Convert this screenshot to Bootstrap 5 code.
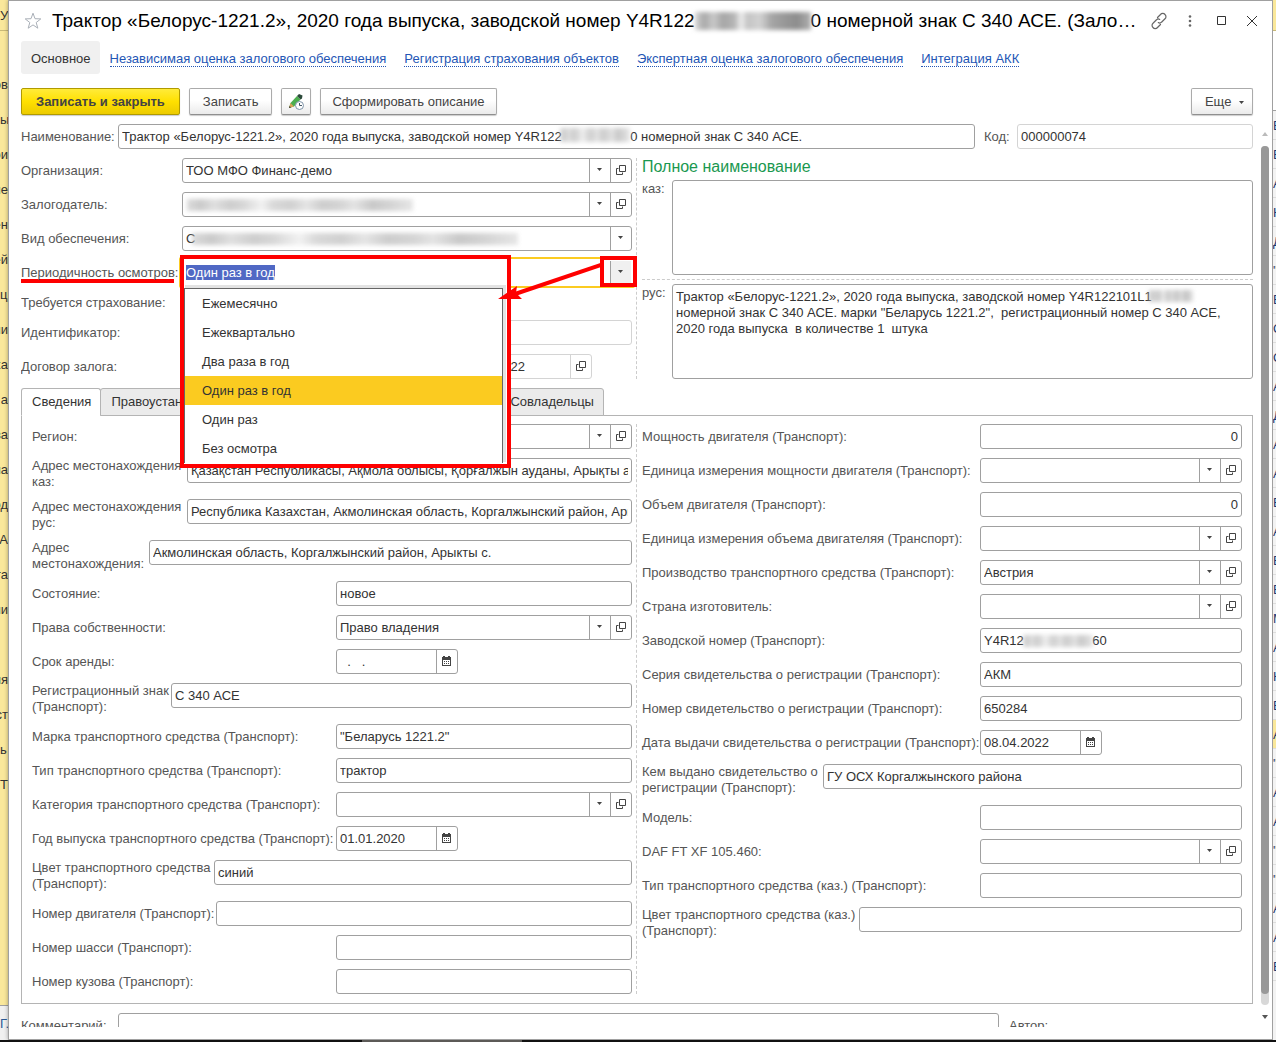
<!DOCTYPE html>
<html lang="ru">
<head>
<meta charset="utf-8">
<meta name="viewport" content="width=device-width, initial-scale=1">
<title>Трактор «Белорус-1221.2» (Залоговое обеспечение)</title>
<link rel="stylesheet" href="https://cdn.jsdelivr.net/npm/bootstrap@5.3.0/dist/css/bootstrap.min.css">
<script src="https://cdn.jsdelivr.net/npm/bootstrap@5.3.0/dist/js/bootstrap.bundle.min.js" defer></script>
<style>
  :root { --line: #a0a0a0; --ink: #333; --lbl: #555; --red: #fe0000; --gold: #fbcb20; }
  body { font: 13px/16px "Liberation Sans", Arial, sans-serif; color: var(--ink); background: #fff; }
  .side-left { width: 8px; flex: none; background: #fae89b; }
  .side-left span { height: 35px; line-height: 35px; white-space: nowrap; direction: rtl; display: block; flex: none; }
  .side-left .side-head { height: 31px; line-height: 31px; border-bottom: 1px solid #c9b977; margin-bottom: 36px; direction: ltr; }
  .side-left .side-foot { background: #f0f0f0; border-top: 1px solid #a0a0a0; color: #2c5a96; direction: ltr; }
  .side-left .side-start { direction: ltr; }
  .side-right { width: 3px; flex: none; color: #1c3a70; background: #f3f3f3; }
  .side-right .strip-top { height: 31px; background: #fae89b; border-bottom: 1px solid #c9b977; flex: none; }
  .side-right .strip-gap { height: 80px; border-bottom: 1px solid #a0a0a0; background: #fff; flex: none; }
  .side-right span { display: block; height: 29px; line-height: 29px; border-bottom: 1px solid #ddd; flex: none; }
  .side-right .picked { background: #fae89b; }
  .taskbar { height: 2px; background: #111; }
  .taskbar div { width: 160px; margin-left: 362px; background: #5c5a57; }

  .win { border: 1px solid var(--line); background: #fff; box-shadow: 0 0 4px rgba(0,0,0,.35); padding-left: 12px; min-width: 0; }
  .title-row { height: 40px; flex: none; padding-right: 10px; }
  .title-row h1 { font-size: 19px; line-height: 28px; color: #000; }
  .star { margin: 0 10px 0 3px; }
  .tool-ico { border: 0; background: none; padding: 0; width: 20px; height: 20px; margin-left: 11px; display: flex; align-items: center; justify-content: center; flex: none; }
  .smudge { background: linear-gradient(90deg, #ccc, #b4b4b4 6%, #d2d2d2 12%, #b9b9b9 19%, #c6c6c6 25%, #ececec 33%, #c9c9c9 38%, #bdbdbd 46%, #dadada 53%, #b8b8b8 60%, #c3c3c3 68%, #d8d8d8 74%, #b2b2b2 82%, #c2c2c2 90%, #dcdcdc); filter: blur(2px); }
  .title-row .smudge { display: inline-block; width: 116px; height: 18px; vertical-align: -3px; background: linear-gradient(90deg, #d5d5d5, #a9a9a9 8%, #c9c9c9 16%, #a6a6a6 24%, #b5b5b5 34%, #efefef 40%, #c4c4c4 45%, #d2d2d2 56%, #a5a5a5 66%, #979797 78%, #8d8d8d 88%, #b0b0b0); }

  .sections { height: 33px; flex: none; gap: 18px; font-size: 13px; }
  .sections .here { background: #f0f0f0; border-radius: 3px; height: 33px; line-height: 35px; padding: 0 9px 0 10px; margin-right: -8px; color: var(--ink); }
  .sections a:not(.here) { color: #2456b5; text-decoration: none; border-bottom: 1px dotted #2456b5; line-height: 14px; margin-top: 3px; }

  .cmds { margin-top: 14px; gap: 9px; padding-right: 19px; flex: none; }
  .cmd { font-size: 13px; line-height: 25px; height: 27px; padding: 0 13px; color: #444; border: 1px solid #ababab; border-bottom-color: #8f8f8f; border-radius: 2px; background: linear-gradient(#fff, #fff 45%, #ebebeb); box-shadow: 0 1px 1px rgba(0,0,0,.2); }
  .cmd-main { font-weight: bold; padding: 0 14px; background: linear-gradient(#ffeb3a, #ffe000 50%, #eccb00); border-color: #b09a00; }
  .cmd-icon { width: 30px; padding: 0; }
  .cmd-tight { padding: 0 11px; }

  .body-row, .view { min-height: 0; }
  .view { overflow: hidden; margin-bottom: 12px; }
  .form-area { min-width: 0; padding-top: 9px; }
  .cols { gap: 10px; position: relative; }
  .cols > div { flex: 1 1 0; min-width: 0; }
  .cols::after { content: ""; position: absolute; top: 0; bottom: 0; left: calc(50% - 1px); border-left: 1px dashed #ccc; }
  .stack { display: flex; flex-direction: column; gap: 9px; }
  .line { display: flex; align-items: flex-start; min-height: 25px; }
  .head-line { margin-bottom: 9px; }
  .line > label, .line > .cap { color: var(--lbl); flex: none; padding-top: 5px; width: 304px; white-space: nowrap; }
  .line > .cap { width: 254px; padding-left: 10px; }
  .line.two > label { padding-top: 0; min-height: 32px; white-space: normal; }
  .line.low { min-height: 17px; }
  .line.low > label { padding-top: 1px; }
  .main-left .line > label { width: 161px; }
  .line > label.l-97 { width: 97px; }
  .line > label.l-117 { width: 117px; }
  .line > label.l-139 { width: 139px; }
  .line > label.l-155 { width: 155px; }
  .line > label.l-182 { width: 182px; }
  .line > label.l-184 { width: 184px; }
  .right-col .line > label { width: 338px; }
  .right-col .line > label.l-181 { width: 181px; }
  .right-col .line > label.l-217 { width: 217px; }

  .fld { display: flex; flex: 1 1 0; min-width: 0; height: 25px; border: 1px solid var(--line); border-radius: 3px; background: #fff; position: relative; }
  .fld input { border: 0; padding: 0 3px; flex: 1 1 0; min-width: 0; width: 0; height: 23px; background: none; color: var(--ink); outline: 0; }
  .fld button { border: 0; border-left: 1px solid var(--line); width: 21px; padding: 0 1px 2px 0; background: none; display: flex; align-items: center; justify-content: center; flex: none; }
  .fld.dim, .fld.dim button { border-color: #d4d4d4; }
  .fld.date { flex: 0 0 122px; }
  .fld.deal { margin-right: 40px; }
  .fld.deal input { text-align: right; padding-right: 45px; }
  .fld .smudge { position: absolute; top: 6px; height: 12px; opacity: .7; }
  .fld .sm-name { left: 441px; width: 70px; top: 3px; height: 14px; }
  .sm-owner { left: 4px; width: 226px; }
  .sm-kind { left: 9px; width: 326px; }
  .sm-serial { left: 42px; width: 70px; }
  .sm-memo { left: 507px; width: 44px; top: 6px; height: 12px; position: absolute; opacity: .8; }
  .code-fld { flex: 0 0 236px; }
  .line > label.l-code { width: 33px; margin-left: 9px; }

  .fld.hot { border-color: transparent; }
  .fld.hot::before { content: ""; position: absolute; inset: -4px -4px; border: 2px solid var(--gold); border-radius: 2px; pointer-events: none; }
  .fld.hot button { background: #f0f0f0; }
  .fld.hot input::selection { background: #5068c4; color: #fff; }
  .choice { position: absolute; z-index: 5; left: 1px; top: 27px; width: 319px; border: 1px solid #666; border-bottom: 0; border-radius: 0; background: #fff; box-shadow: 2px -2px 0 1px #e3e3e3; }
  .choice .list-group-item { border: 0; border-radius: 0; padding: 0 17px; height: 29px; line-height: 30px; color: var(--ink); background: #fff; }
  .choice .list-group-item.active { background: var(--gold); margin-top: 0; }
  .mark-list { position: absolute; z-index: 6; left: -3px; top: -6px; width: 331px; height: 213px; border: 4px solid var(--red); pointer-events: none; }
  .mark-back { position: absolute; left: -3px; top: -6px; width: 331px; height: 213px; background: #fff; z-index: 3; }
  .mark-btn { position: absolute; z-index: 6; right: -6px; top: -5px; width: 37px; height: 31px; border: 4px solid var(--red); pointer-events: none; }
  .mark-arrow { position: absolute; z-index: 7; right: 27px; top: 0; pointer-events: none; }
  .hot input { position: relative; z-index: 4; }
  .line > label.flagged { width: 153px; margin-right: 8px; height: 23px; border-bottom: 4px solid var(--red); }

  .full-name { color: #1a9850; font-size: 16px; line-height: 18px; margin: 0 0 4px; }
  .memo { flex: 1; height: 95px; resize: none; border: 1px solid var(--line); border-radius: 3px; padding: 4px 3px; color: var(--ink); outline: 0; display: block; overflow: hidden; white-space: pre-wrap; min-width: 0; }
  .memo-row { position: relative; }
  .memo-row > label { width: 30px; color: var(--lbl); padding-top: 1px; }
  .memo-sep { border-top: 1px dashed #ccc; margin: 4px 0; }

  .tabs { margin-top: 9px; height: 28px; margin-bottom: -1px; position: relative; }
  .tabs .nav-link { color: var(--ink); background: #ebebeb; border: 1px solid #b4b4b4; border-radius: 3px 3px 0 0; padding: 0 9px 0 10px; height: 28px; line-height: 26px; margin-left: -1px; text-align: left; }
  .tabs .nav-link.active { color: var(--ink); background: #fff; border-color: #b4b4b4 #b4b4b4 #fff; margin-left: 0; }
  .tabs .wide { width: 400px; }
  .panel { border: 1px solid #b4b4b4; padding: 8px 10px 9px; }
  .foot-line { margin-top: 9px; }
  .bar { width: 19px; flex: none; display: flex; flex-direction: column; align-items: center; padding: 17px 0 8px 5px; }
  .bar .track { flex: 1; width: 8px; border-radius: 4px; background: #d8d8d8; margin: 10px 0; padding-bottom: 11px; }
  .bar .thumb { height: 100%; border-radius: 4px; background: #999; }
</style>
</head>
<body>
<svg class="d-none" xmlns="http://www.w3.org/2000/svg">
  <symbol id="i-down" viewBox="0 0 5 3"><path d="M0 0h5L2.500 3z" fill="#444"/></symbol>
  <symbol id="i-open" viewBox="0 0 10 10"><path d="M3.500.500h6v6h-6zM2.500 3.500h-2v6h6v-2" fill="none" stroke="#444"/></symbol>
  <symbol id="i-cal" viewBox="0 0 9 10"><path d="M0 1h1V0h2v1h3V0h2v1h1v9H0zM1 4v5h7V4z" fill="#444" fill-rule="evenodd"/><path d="M2 5h1v1H2zM4 5h1v1H4zM6 5h1v1H6zM2 7h1v1H2zM4 7h1v1H4zM6 7h1v1H6z" fill="#444"/></symbol>
</svg>
<div class="vh-100 d-flex flex-column overflow-hidden">
  <div class="body-row d-flex flex-fill">
    <aside class="side-left d-flex flex-column overflow-hidden" aria-hidden="true">
      <span class="side-head">УМ</span>
      <span>ов</span><span class="side-start">ы</span><span>ои</span><span>че</span><span>ен</span><span>ей</span><span class="side-start">ц</span><span>ии</span><span>ка</span><span>а</span><span>ва</span><span>ла</span><span>од</span><span>МА</span><span>та</span><span>ыи</span><span></span><span>ия</span><span>ст</span><span class="side-start">ь</span><span>Т</span>
      <span class="side-foot mt-auto">Г.</span>
    </aside>

    <main class="win flex-fill d-flex flex-column">
      <header class="title-row d-flex align-items-center">
        <svg class="star flex-shrink-0" width="18" height="18" viewBox="0 0 18 18"><path d="M9 1.200l2 5.500 5.800.200-4.600 3.600 1.600 5.700L9 12.900l-4.800 3.300 1.600-5.700L1.200 6.900 7 6.700z" fill="none" stroke="#aab0b8"/></svg>
        <h1 class="m-0 text-truncate flex-fill">Трактор «Белорус-1221.2», 2020 года выпуска, заводской номер Y4R122<span class="smudge"></span>0 номерной знак С 340 АСЕ. (Залоговое обеспечение)</h1>
        <button class="tool-ico ms-2" aria-label="Ссылка"><svg width="18" height="18" viewBox="0 0 18 18" fill="none" stroke="#666" stroke-width="1.200" stroke-linecap="round"><path d="M7.500 5.500l3-3a2.900 2.900 0 0 1 4.500 0 2.900 2.900 0 0 1 0 4.300l-3.500 3.400a2.600 2.600 0 0 1-3.200.400M10.500 12.500l-3 3a2.900 2.900 0 0 1-4.500 0 2.900 2.900 0 0 1 0-4.300l3.500-3.400a2.600 2.600 0 0 1 3.200-.400"/></svg></button>
        <button class="tool-ico" aria-label="Меню"><svg width="4" height="12" viewBox="0 0 4 12" fill="#666"><circle cx="2" cy="1.500" r="1.300"/><circle cx="2" cy="6" r="1.300"/><circle cx="2" cy="10.500" r="1.300"/></svg></button>
        <button class="tool-ico" aria-label="Развернуть"><svg width="10" height="10" viewBox="0 0 10 10"><path d="M1.500.500h8v8h-8z" fill="none" stroke="#333"/></svg></button>
        <button class="tool-ico" aria-label="Закрыть"><svg width="10" height="10" viewBox="0 0 10 10"><path d="M0 0l10 10M10 0L0 10" stroke="#333"/></svg></button>
      </header>

      <nav class="sections d-flex align-items-center">
        <a class="here text-decoration-none" href="#">Основное</a>
        <a href="#">Независимая оценка залогового обеспечения</a>
        <a href="#">Регистрация страхования объектов</a>
        <a href="#">Экспертная оценка залогового обеспечения</a>
        <a href="#">Интеграция АКК</a>
      </nav>

      <div class="cmds d-flex">
        <button class="cmd cmd-main">Записать и закрыть</button>
        <button class="cmd">Записать</button>
        <button class="cmd cmd-icon" aria-label="История"><svg class="d-block m-auto" width="18" height="18" viewBox="0 0 18 18"><path d="M2 15l1.500-5L10 3l3.500 3.500-6.500 7z" fill="#4cae4f"/><path d="M10 3l2-2 3.500 1.500-.500 3-1.500 1z" fill="#2c4a3a"/><path d="M2 15l1.500-5 3.500 3.500z" fill="#d9a45b"/><path d="M2 15l.600-2 1.400 1.400z" fill="#333"/><circle cx="12.500" cy="12.500" r="4" fill="#fff" stroke="#7d93a8"/><path d="M12.500 10v2.500h2.500" fill="none" stroke="#456"/></svg></button>
        <button class="cmd cmd-tight">Сформировать описание</button>
        <button class="cmd ms-auto pe-2">Еще <svg class="ms-1" width="5" height="3"><use href="#i-down"/></svg></button>
      </div>

      <div class="view d-flex flex-fill">
        <div class="form-area flex-fill">
          <div class="line head-line">
            <label class="l-97" for="f-name">Наименование:</label>
            <div class="fld"><input id="f-name" value="Трактор «Белорус-1221.2», 2020 года выпуска, заводской номер Y4R122&nbsp;&nbsp;&nbsp;&nbsp;&nbsp;&nbsp;&nbsp;&nbsp;&nbsp;&nbsp;&nbsp;&nbsp;&nbsp;&nbsp;&nbsp;&nbsp;&nbsp;&nbsp;&nbsp;0 номерной знак С 340 АСЕ."><span class="smudge sm-name"></span></div>
            <label class="l-code" for="f-code">Код:</label>
            <div class="fld dim code-fld"><input id="f-code" value="000000074" readonly></div>
          </div>

          <div class="cols d-flex">
            <div class="stack main-left">
              <div class="line"><label for="f-org">Организация:</label><div class="fld"><input id="f-org" value="ТОО МФО Финанс-демо"><button aria-label="Выбрать"><svg width="5" height="3"><use href="#i-down"/></svg></button><button aria-label="Открыть"><svg width="10" height="10"><use href="#i-open"/></svg></button></div></div>
              <div class="line"><label for="f-owner">Залогодатель:</label><div class="fld"><input id="f-owner"><span class="smudge sm-owner"></span><button aria-label="Выбрать"><svg width="5" height="3"><use href="#i-down"/></svg></button><button aria-label="Открыть"><svg width="10" height="10"><use href="#i-open"/></svg></button></div></div>
              <div class="line"><label for="f-kind">Вид обеспечения:</label><div class="fld"><input id="f-kind" value="С"><span class="smudge sm-kind"></span><button aria-label="Выбрать"><svg width="5" height="3"><use href="#i-down"/></svg></button></div></div>
              <div class="line"><label class="flagged" for="f-period">Периодичность осмотров:</label>
                <div class="fld hot">
                  <div class="mark-back"></div>
                  <input id="f-period" role="combobox" aria-expanded="true" aria-controls="period-list" value="Один раз в год">
                  <button aria-label="Выбрать"><svg width="5" height="3"><use href="#i-down"/></svg></button>
                  <div class="choice list-group" id="period-list" role="listbox">
                    <a href="#" role="option" class="list-group-item">Ежемесячно</a>
                    <a href="#" role="option" class="list-group-item">Ежеквартально</a>
                    <a href="#" role="option" class="list-group-item">Два раза в год</a>
                    <a href="#" role="option" class="list-group-item active" aria-selected="true">Один раз в год</a>
                    <a href="#" role="option" class="list-group-item">Один раз</a>
                    <a href="#" role="option" class="list-group-item">Без осмотра</a>
                  </div>
                  <div class="mark-list"></div>
                  <div class="mark-btn"></div>
                  <svg class="mark-arrow" width="106" height="40" viewBox="0 0 106 40"><path d="M106 3L17 33" stroke="#fe0000" stroke-width="4"/><path d="M0 38L19 25l-1 7 6 6z" fill="#fe0000"/></svg>
                </div>
              </div>
              <div class="line low"><label for="f-ins">Требуется страхование:</label><input id="f-ins" type="checkbox" class="m-0"></div>
              <div class="line"><label for="f-id">Идентификатор:</label><div class="fld dim"><input id="f-id" readonly></div></div>
              <div class="line"><label for="f-deal">Договор залога:</label><div class="fld dim deal"><input id="f-deal" value="22" readonly><button aria-label="Открыть"><svg width="10" height="10"><use href="#i-open"/></svg></button></div></div>
            </div>
            <div>
              <h2 class="full-name">Полное наименование</h2>
              <div class="memo-row d-flex"><label for="f-kaz">каз:</label><textarea class="memo" id="f-kaz"></textarea></div>
              <div class="memo-sep"></div>
              <div class="memo-row d-flex"><label for="f-rus">рус:</label><textarea class="memo" id="f-rus">Трактор «Белорус-1221.2», 2020 года выпуска, заводской номер Y4R122101L1
номерной знак С 340 АСЕ. марки "Беларусь 1221.2",  регистрационный номер С 340 АСЕ, 2020 года выпуска  в количестве 1  штука</textarea><span class="smudge sm-memo"></span></div>
            </div>
          </div>

          <div class="tabs nav nav-tabs border-0 flex-nowrap" role="tablist">
            <button class="nav-link active" role="tab">Сведения</button>
            <button class="nav-link wide" role="tab">Правоустанавливающие документы</button>
            <button class="nav-link" role="tab">Совладельцы</button>
          </div>
          <div class="panel">
            <div class="cols d-flex">
              <div class="stack">
                <div class="line"><label for="a1">Регион:</label><div class="fld"><input id="a1"><button aria-label="Выбрать"><svg width="5" height="3"><use href="#i-down"/></svg></button><button aria-label="Открыть"><svg width="10" height="10"><use href="#i-open"/></svg></button></div></div>
                <div class="line two"><label class="l-155" for="a2">Адрес местонахождения каз:</label><div class="fld"><input id="a2" value="Қазақстан Республикасы, Ақмола облысы, Қорғалжын ауданы, Арықты ауылы"></div></div>
                <div class="line two"><label class="l-155" for="a3">Адрес местонахождения рус:</label><div class="fld"><input id="a3" value="Республика Казахстан, Акмолинская область, Коргалжынский район, Арыкты с."></div></div>
                <div class="line two"><label class="l-117" for="a4">Адрес местонахождения:</label><div class="fld"><input id="a4" value="Акмолинская область, Коргалжынский район, Арыкты с."></div></div>
                <div class="line"><label for="a5">Состояние:</label><div class="fld"><input id="a5" value="новое"></div></div>
                <div class="line"><label for="a6">Права собственности:</label><div class="fld"><input id="a6" value="Право владения"><button aria-label="Выбрать"><svg width="5" height="3"><use href="#i-down"/></svg></button><button aria-label="Открыть"><svg width="10" height="10"><use href="#i-open"/></svg></button></div></div>
                <div class="line"><label for="a7">Срок аренды:</label><div class="fld date"><input id="a7" value="&nbsp;&nbsp;.&nbsp;&nbsp;&nbsp;."><button aria-label="Календарь"><svg width="9" height="10"><use href="#i-cal"/></svg></button></div></div>
                <div class="line two"><label class="l-139" for="a8">Регистрационный знак (Транспорт):</label><div class="fld"><input id="a8" value="С 340 АСЕ"></div></div>
                <div class="line"><label for="a9">Марка транспортного средства (Транспорт):</label><div class="fld"><input id="a9" value='"Беларусь 1221.2"'></div></div>
                <div class="line"><label for="a10">Тип транспортного средства (Транспорт):</label><div class="fld"><input id="a10" value="трактор"></div></div>
                <div class="line"><label for="a11">Категория транспортного средства (Транспорт):</label><div class="fld"><input id="a11"><button aria-label="Выбрать"><svg width="5" height="3"><use href="#i-down"/></svg></button><button aria-label="Открыть"><svg width="10" height="10"><use href="#i-open"/></svg></button></div></div>
                <div class="line"><label for="a12">Год выпуска транспортного средства (Транспорт):</label><div class="fld date"><input id="a12" value="01.01.2020"><button aria-label="Календарь"><svg width="9" height="10"><use href="#i-cal"/></svg></button></div></div>
                <div class="line two"><label class="l-182" for="a13">Цвет транспортного средства (Транспорт):</label><div class="fld"><input id="a13" value="синий"></div></div>
                <div class="line"><label class="l-184" for="a14">Номер двигателя (Транспорт):</label><div class="fld"><input id="a14"></div></div>
                <div class="line"><label for="a15">Номер шасси (Транспорт):</label><div class="fld"><input id="a15"></div></div>
                <div class="line"><label for="a16">Номер кузова (Транспорт):</label><div class="fld"><input id="a16"></div></div>
              </div>
              <div class="stack right-col">
                <div class="line"><label for="b1">Мощность двигателя (Транспорт):</label><div class="fld"><input id="b1" class="text-end" value="0"></div></div>
                <div class="line"><label for="b2">Единица измерения мощности двигателя (Транспорт):</label><div class="fld"><input id="b2"><button aria-label="Выбрать"><svg width="5" height="3"><use href="#i-down"/></svg></button><button aria-label="Открыть"><svg width="10" height="10"><use href="#i-open"/></svg></button></div></div>
                <div class="line"><label for="b3">Объем двигателя (Транспорт):</label><div class="fld"><input id="b3" class="text-end" value="0"></div></div>
                <div class="line"><label for="b4">Единица измерения объема двигателяя (Транспорт):</label><div class="fld"><input id="b4"><button aria-label="Выбрать"><svg width="5" height="3"><use href="#i-down"/></svg></button><button aria-label="Открыть"><svg width="10" height="10"><use href="#i-open"/></svg></button></div></div>
                <div class="line"><label for="b5">Производство транспортного средства (Транспорт):</label><div class="fld"><input id="b5" value="Австрия"><button aria-label="Выбрать"><svg width="5" height="3"><use href="#i-down"/></svg></button><button aria-label="Открыть"><svg width="10" height="10"><use href="#i-open"/></svg></button></div></div>
                <div class="line"><label for="b6">Страна изготовитель:</label><div class="fld"><input id="b6"><button aria-label="Выбрать"><svg width="5" height="3"><use href="#i-down"/></svg></button><button aria-label="Открыть"><svg width="10" height="10"><use href="#i-open"/></svg></button></div></div>
                <div class="line"><label for="b7">Заводской номер (Транспорт):</label><div class="fld"><input id="b7" value="Y4R12&nbsp;&nbsp;&nbsp;&nbsp;&nbsp;&nbsp;&nbsp;&nbsp;&nbsp;&nbsp;&nbsp;&nbsp;&nbsp;&nbsp;&nbsp;&nbsp;&nbsp;&nbsp;&nbsp;60"><span class="smudge sm-serial"></span></div></div>
                <div class="line"><label for="b8">Серия свидетельства о регистрации (Транспорт):</label><div class="fld"><input id="b8" value="АКМ"></div></div>
                <div class="line"><label for="b9">Номер свидетельство о регистрации (Транспорт):</label><div class="fld"><input id="b9" value="650284"></div></div>
                <div class="line"><label for="b10">Дата выдачи свидетельства о регистрации (Транспорт):</label><div class="fld date"><input id="b10" value="08.04.2022"><button aria-label="Календарь"><svg width="9" height="10"><use href="#i-cal"/></svg></button></div></div>
                <div class="line two"><label class="l-181" for="b11">Кем выдано свидетельство о регистрации (Транспорт):</label><div class="fld"><input id="b11" value="ГУ ОСХ Коргалжынского района"></div></div>
                <div class="line"><label for="b12">Модель:</label><div class="fld"><input id="b12"></div></div>
                <div class="line"><label for="b13">DAF FT XF 105.460:</label><div class="fld"><input id="b13"><button aria-label="Выбрать"><svg width="5" height="3"><use href="#i-down"/></svg></button><button aria-label="Открыть"><svg width="10" height="10"><use href="#i-open"/></svg></button></div></div>
                <div class="line"><label for="b14">Тип транспортного средства (каз.) (Транспорт):</label><div class="fld"><input id="b14"></div></div>
                <div class="line two"><label class="l-217" for="b15">Цвет транспортного средства (каз.) (Транспорт):</label><div class="fld"><input id="b15"></div></div>
              </div>
            </div>
          </div>
          <div class="line foot-line">
            <label class="l-97" for="f-note">Комментарий:</label>
            <div class="fld"><input id="f-note"></div>
            <span class="cap">Автор:</span>
          </div>
        </div>
        <div class="bar" aria-hidden="true">
          <svg class="flex-shrink-0" width="6" height="4" viewBox="0 0 6 4"><path d="M0 4h6L3 0z" fill="#bbb"/></svg>
          <div class="track"><div class="thumb"></div></div>
          <svg class="flex-shrink-0" width="6" height="4" viewBox="0 0 6 4"><path d="M0 0h6L3 4z" fill="#555"/></svg>
        </div>
      </div>
    </main>

    <aside class="side-right d-flex flex-column overflow-hidden" aria-hidden="true">
      <div class="strip-top"></div><div class="strip-gap"></div>
      <span>В</span><span>Б</span><span>А</span><span>К</span><span>Д</span><span>"</span><span>Б</span><span>О</span><span>О</span><span>А</span><span>Д</span><span>А</span><span>А</span><span>Б</span><span>А</span><span>Е</span><span>Б</span><span>М</span><span>А</span><span>К</span><span>Б</span><span class="picked">А</span><span>"</span><span>А</span><span>А</span><span>"</span><span>"</span><span>А</span><span>А</span><span>Б</span>
    </aside>
  </div>
  <div class="taskbar d-flex flex-shrink-0"><div></div></div>
</div>
<script>
  const period = document.getElementById('f-period');
  period.focus();
  period.select();
</script>
</body>
</html>
